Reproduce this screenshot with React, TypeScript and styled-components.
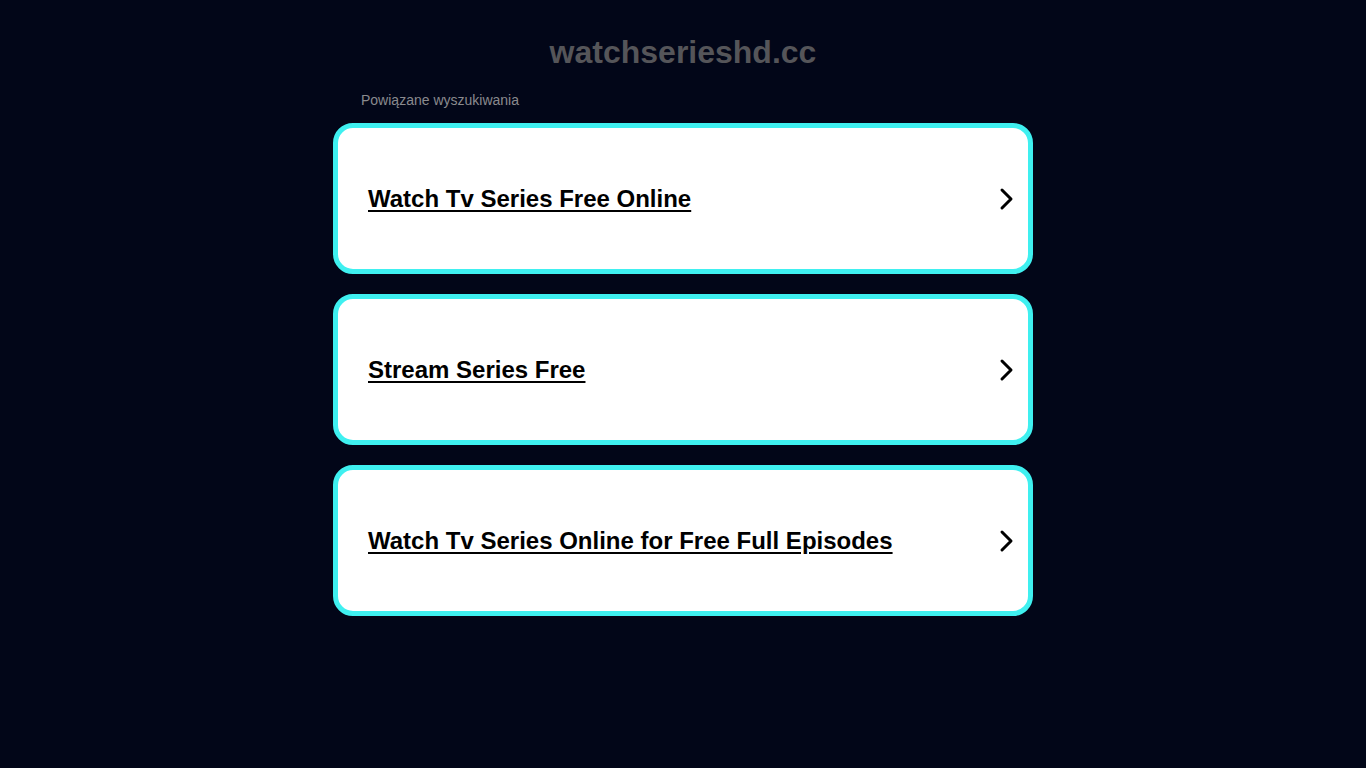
import React from "react";
import styled, { createGlobalStyle } from "styled-components";

const Global = createGlobalStyle`
  html, body { margin: 0; padding: 0; background: #020618; }
  body { font-family: "Liberation Sans", Arial, sans-serif; }
`;

const Page = styled.div`
  min-height: 768px;
  background: #020618;
  display: flex;
  flex-direction: column;
  align-items: center;
`;

const Title = styled.h1`
  margin: 34px 0 0;
  font-size: 32px;
  line-height: 37px;
  font-weight: 700;
  color: #555559;
`;

const Column = styled.div`
  width: 700px;
  display: flex;
  flex-direction: column;
`;

const Related = styled.div`
  margin: 20px 0 0 28px;
  font-size: 14px;
  line-height: 18px;
  color: #8a8a8e;
`;

const List = styled.div`
  margin-top: 14px;
  display: flex;
  flex-direction: column;
  gap: 20px;
`;

const Card = styled.a`
  box-sizing: border-box;
  height: 151px;
  border: 5px solid #3ff0f0;
  border-radius: 20px;
  background: #ffffff;
  display: flex;
  align-items: center;
  justify-content: space-between;
  padding: 0 14px 0 30px;
  text-decoration: none;
  color: #000;
`;

const Label = styled.span`
  font-size: 24px;
  font-weight: 700;
  text-decoration: underline;
  text-underline-offset: 3px;
  color: #000;
`;

const Chevron = () => (
  <svg width="16" height="24" viewBox="0 0 16 24" fill="none">
    <path d="M4 3 L13 12 L4 21" stroke="#000" strokeWidth="3" strokeLinecap="round" strokeLinejoin="round" />
  </svg>
);

const items = [
  "Watch Tv Series Free Online",
  "Stream Series Free",
  "Watch Tv Series Online for Free Full Episodes",
];

export default function App() {
  return (
    <>
      <Global />
      <Page>
        <Title>watchserieshd.cc</Title>
        <Column>
          <Related>Powiązane wyszukiwania</Related>
          <List>
            {items.map((t) => (
              <Card key={t} href="#">
                <Label>{t}</Label>
                <Chevron />
              </Card>
            ))}
          </List>
        </Column>
      </Page>
    </>
  );
}
